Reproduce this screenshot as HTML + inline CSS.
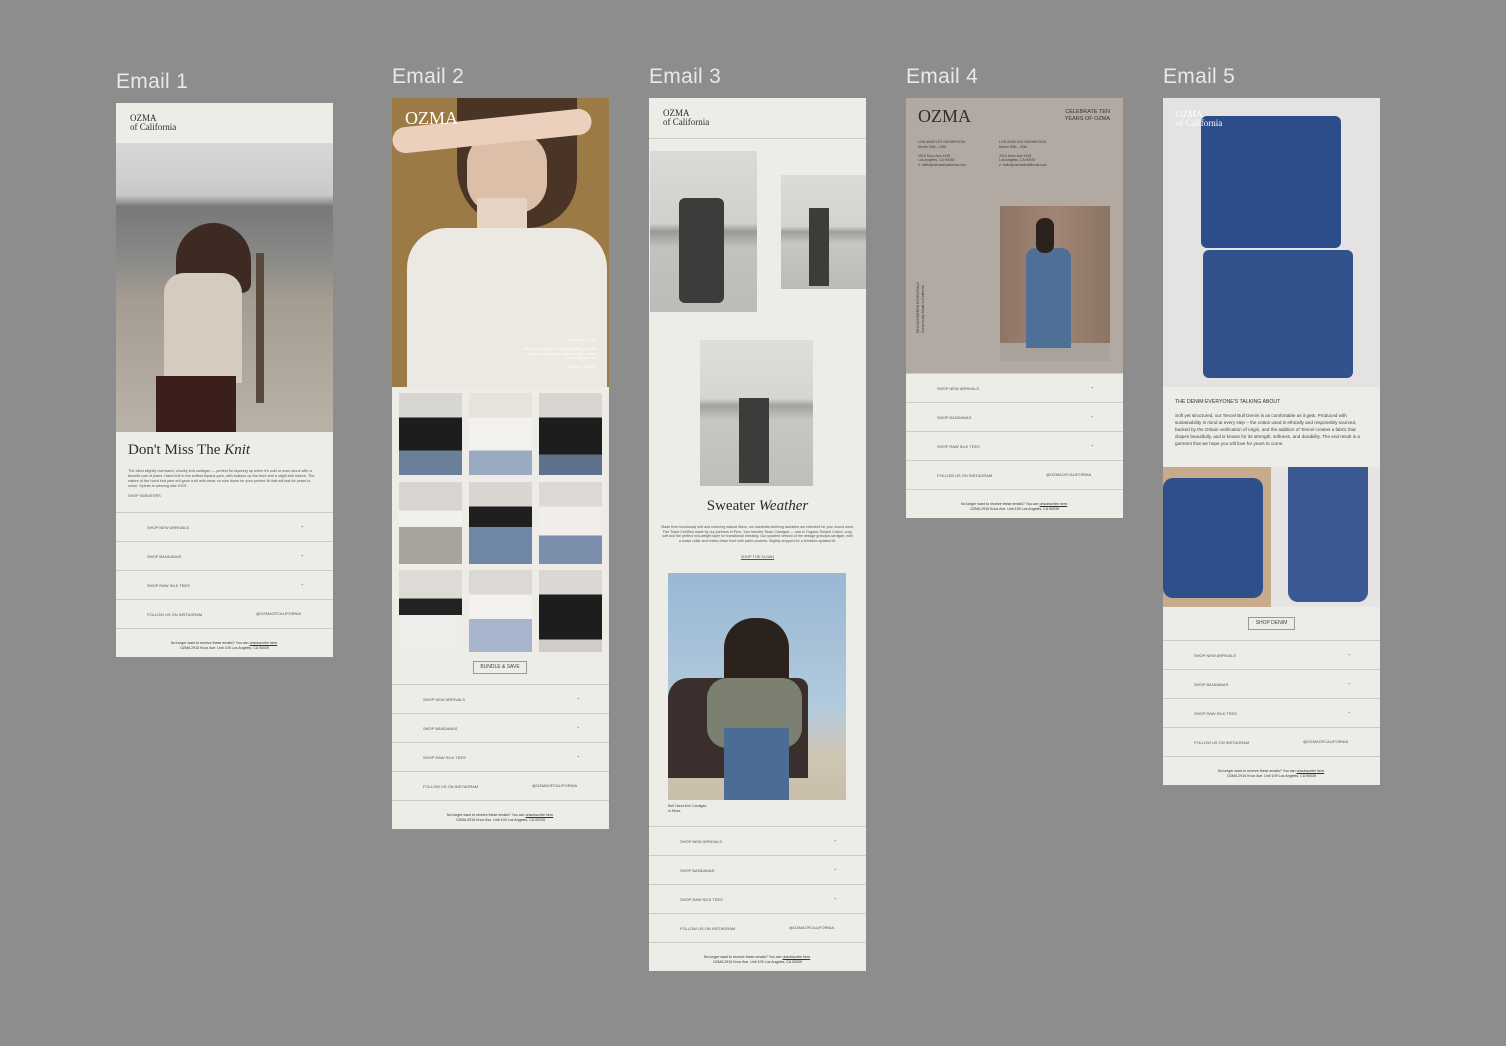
<!DOCTYPE html>
<html><head><meta charset="utf-8"><style>
*{margin:0;padding:0;box-sizing:border-box}
body{width:1506px;height:1046px;background:#8d8d8d;position:relative;overflow:hidden;font-family:"Liberation Sans",sans-serif}
.a{position:absolute}
.lbl{position:absolute;color:#e9e9e9;font-size:21px;letter-spacing:.3px}
.em{position:absolute;background:#eeece7;width:217px}
.ser{font-family:"Liberation Serif",serif;color:#2b2b2b}
.row{position:absolute;left:0;width:217px;height:29px;border-top:1px solid #cdcbc6;font-size:4px;color:#555}
.row span{position:absolute;top:12px;left:31px}
.row b{position:absolute;top:11px;left:185px;font-weight:normal}
.foot{position:absolute;left:0;width:217px;height:29px;border-top:1px solid #cdcbc6;font-size:3.6px;color:#333;text-align:center;padding-top:12px;line-height:5px}
.tx{font-size:3.8px;line-height:5px;color:#555}
</style></head><body>

<div class="lbl" style="left:116px;top:70px">Email 1</div>
<div class="lbl" style="left:392px;top:65px">Email 2</div>
<div class="lbl" style="left:649px;top:65px">Email 3</div>
<div class="lbl" style="left:906px;top:65px">Email 4</div>
<div class="lbl" style="left:1163px;top:65px">Email 5</div>

<!-- Email 1 -->
<div class="em" style="left:116px;top:103px;height:554px">
 <div class="a ser" style="left:14px;top:11px;font-size:9px;line-height:9px">OZMA<br>of California</div>
 <div class="a" style="left:0;top:40px;width:217px;height:289px;background:linear-gradient(180deg,#d8d8d6 0%,#c9c9c7 18%,#77787a 22%,#8a8a88 40%,#a59d92 55%,#b9b2a7 100%)"></div>
 <div class="a" style="left:60px;top:120px;width:75px;height:70px;border-radius:40px 40px 10px 10px;background:#3d2a22"></div>
 <div class="a" style="left:48px;top:170px;width:78px;height:110px;border-radius:20px 20px 0 0;background:#d6cbbf"></div>
 <div class="a" style="left:40px;top:273px;width:80px;height:56px;background:#3b1f1a"></div>
 <div class="a" style="left:140px;top:150px;width:8px;height:150px;background:#5a4a3e"></div>
 <div class="a ser" style="left:12px;top:339px;font-size:15px">Don't Miss The <i>Knit</i></div>
 <div class="a tx" style="left:12px;top:366px;width:192px">The ideal slightly oversized, chunky knit cardigan — perfect for layering up when it's cold or worn alone with a favorite pair of jeans. Hand knit in the softest Alpaca yarn, with buttons up the front and a slight bell sleeve. The nature of the hand knit yarn will grow a bit with wear, so size down for your perfect fit that will last for years to come. Sylvan is wearing size XS/S.</div>
 <div class="a tx" style="left:12px;top:391px">SHOP SWEATERS</div>
 <div class="row" style="top:409px"><span>SHOP NEW ARRIVALS</span><b>+</b></div>
 <div class="row" style="top:438px"><span>SHOP BANDANAS</span><b>+</b></div>
 <div class="row" style="top:467px"><span>SHOP RAW SILK TEES</span><b>+</b></div>
 <div class="row" style="top:496px"><span>FOLLOW US ON INSTAGRAM</span><b style="left:140px">@OZMAOFCALIFORNIA</b></div>
 <div class="foot" style="top:525px">No longer want to receive these emails? You can <u>unsubscribe here</u>.<br>OZMA 2915 Knox Ave. Unit 109 Los Angeles, CA 90039</div>
</div>

<!-- Email 2 -->
<div class="em" style="left:392px;top:98px;height:731px">
 <div class="a" style="left:0;top:0;width:217px;height:289px;background:#9c7a45"></div>
 <div class="a" style="left:65px;top:0;width:120px;height:130px;border-radius:0 0 50px 60px;background:#4a3426"></div>
 <div class="a" style="left:75px;top:35px;width:80px;height:80px;border-radius:30px;background:#dcbfa9"></div>
 <div class="a" style="left:0;top:20px;width:200px;height:26px;border-radius:13px;background:#ead0bd;transform:rotate(-6deg)"></div>
 <div class="a" style="left:85px;top:100px;width:50px;height:40px;background:#e7d3c3"></div>
 <div class="a" style="left:15px;top:130px;width:200px;height:159px;border-radius:40px 40px 0 0;background:#ece8e2"></div>
 <div class="a ser" style="left:13px;top:10px;font-size:18px;color:#fff">OZMA</div>
 <div class="a" style="left:130px;top:240px;width:74px;font-size:3.5px;line-height:4.5px;color:#fff;text-align:right">SIGNATURE SILK<br><br>Our classic raw silk. The perfect fitting, so-soft, made you want them again and again. Made from 100% silk noil.<br><br>BUNDLE &amp; SAVE</div>
 <div class="a" style="left:7px;top:295px;width:63px;height:82px;background:linear-gradient(#d8d6d2 30%,#1d1d1d 30%,#1d1d1d 70%,#6a7f99 70%)"></div>
 <div class="a" style="left:77px;top:295px;width:63px;height:82px;background:linear-gradient(#e6e2dc 30%,#f3f1ed 30%,#f3f1ed 70%,#9aaac0 70%)"></div>
 <div class="a" style="left:147px;top:295px;width:63px;height:82px;background:linear-gradient(#d9d6d1 30%,#1d1d1d 30%,#1d1d1d 75%,#5e728d 75%)"></div>
 <div class="a" style="left:7px;top:384px;width:63px;height:82px;background:linear-gradient(#d8d5d0 35%,#f2f0ec 35%,#f2f0ec 55%,#a7a49c 55%)"></div>
 <div class="a" style="left:77px;top:384px;width:63px;height:82px;background:linear-gradient(#d9d6d1 30%,#1f1f1f 30%,#1f1f1f 55%,#6f86a6 55%)"></div>
 <div class="a" style="left:147px;top:384px;width:63px;height:82px;background:linear-gradient(#dcd9d4 30%,#f1eeea 30%,#f1eeea 65%,#7b8fad 65%)"></div>
 <div class="a" style="left:7px;top:472px;width:63px;height:82px;background:linear-gradient(#dedbd6 35%,#222 35%,#222 55%,#efede9 55%)"></div>
 <div class="a" style="left:77px;top:472px;width:63px;height:82px;background:linear-gradient(#dcd9d4 30%,#f3f1ed 30%,#f3f1ed 60%,#a6b5cc 60%)"></div>
 <div class="a" style="left:147px;top:472px;width:63px;height:82px;background:linear-gradient(#dbd8d3 30%,#1d1d1d 30%,#1d1d1d 85%,#d0cdc8 85%)"></div>
 <div class="a" style="left:81px;top:563px;width:54px;height:13px;border:1px solid #999;font-size:5px;color:#444;text-align:center;line-height:11px">BUNDLE &amp; SAVE</div>
 <div class="row" style="top:586px"><span>SHOP NEW ARRIVALS</span><b>+</b></div>
 <div class="row" style="top:615px"><span>SHOP BANDANAS</span><b>+</b></div>
 <div class="row" style="top:644px"><span>SHOP RAW SILK TEES</span><b>+</b></div>
 <div class="row" style="top:673px"><span>FOLLOW US ON INSTAGRAM</span><b style="left:140px">@OZMAOFCALIFORNIA</b></div>
 <div class="foot" style="top:702px">No longer want to receive these emails? You can <u>unsubscribe here</u>.<br>OZMA 2915 Knox Ave. Unit 109 Los Angeles, CA 90039</div>
</div>

<!-- Email 3 -->
<div class="em" style="left:649px;top:98px;height:873px">
 <div class="a ser" style="left:14px;top:11px;font-size:9px;line-height:9px">OZMA<br>of California</div>
 <div class="a" style="left:0;top:40px;width:217px;border-top:1px solid #cfcdc8"></div>
 <div class="a" style="left:1px;top:53px;width:107px;height:161px;background:linear-gradient(180deg,#dcdad6 0%,#d2d0cc 45%,#9a9996 50%,#c4c2be 60%,#bdbbb7 100%)"></div>
 <div class="a" style="left:30px;top:100px;width:45px;height:105px;background:#3d3c3a;border-radius:6px"></div>
 <div class="a" style="left:132px;top:77px;width:85px;height:114px;background:linear-gradient(180deg,#dddbd7 0%,#d5d3cf 45%,#a09f9b 50%,#c8c6c2 60%,#bcbab6 100%)"></div>
 <div class="a" style="left:160px;top:110px;width:20px;height:78px;background:#3d3c3a"></div>
 <div class="a" style="left:51px;top:242px;width:113px;height:146px;background:linear-gradient(180deg,#e0ded9 0%,#d7d5d1 40%,#a3a29e 45%,#c9c7c3 55%,#c0beba 100%)"></div>
 <div class="a" style="left:90px;top:300px;width:30px;height:85px;background:#3d3c3a"></div>
 <div class="a ser" style="left:0;top:400px;width:217px;text-align:center;font-size:15px">Sweater <i>Weather</i></div>
 <div class="a tx" style="left:12px;top:427px;width:193px;text-align:center;font-size:3.6px;line-height:4.5px">Made from luxuriously soft and enduring natural fibers, our wardrobe-defining sweaters are intended for your sound wear. Fair Trade Certified made by our partners in Peru. Your favorite Sloan Cardigan — now in Organic Temple Cotton, cozy soft and the perfect mid-weight layer for transitional dressing. Our updated version of the vintage grandpa cardigan, with a shawl collar and button down front with patch pockets. Slightly cropped for a feminine updated fit.</div>
 <div class="a tx" style="left:0;top:457px;width:217px;text-align:center"><u>SHOP THE SLOAN</u></div>
 <div class="a" style="left:19px;top:475px;width:178px;height:227px;background:linear-gradient(180deg,#98b8d4 0%,#b3cadc 60%,#cfc6b4 80%,#c8bea9 100%)"></div>
 <div class="a" style="left:19px;top:580px;width:140px;height:100px;background:#3a2f2c;border-radius:20px 10px 0 0"></div>
 <div class="a" style="left:75px;top:520px;width:65px;height:85px;border-radius:30px 30px 5px 5px;background:#2b211d"></div>
 <div class="a" style="left:58px;top:580px;width:95px;height:70px;border-radius:20px;background:#7b8070"></div>
 <div class="a" style="left:75px;top:630px;width:65px;height:72px;background:#4d6c95"></div>
 <div class="a" style="left:19px;top:706px;font-size:3.6px;color:#444;line-height:5px">Bell Hand-Knit Cardigan<br>in Moss</div>
 <div class="row" style="top:728px"><span>SHOP NEW ARRIVALS</span><b>+</b></div>
 <div class="row" style="top:757px"><span>SHOP BANDANAS</span><b>+</b></div>
 <div class="row" style="top:786px"><span>SHOP RAW SILK TEES</span><b>+</b></div>
 <div class="row" style="top:815px"><span>FOLLOW US ON INSTAGRAM</span><b style="left:140px">@OZMAOFCALIFORNIA</b></div>
 <div class="foot" style="top:844px">No longer want to receive these emails? You can <u>unsubscribe here</u>.<br>OZMA 2915 Knox Ave. Unit 109 Los Angeles, CA 90039</div>
</div>

<!-- Email 4 -->
<div class="em" style="left:906px;top:98px;height:420px">
 <div class="a" style="left:0;top:0;width:217px;height:275px;background:#b2aaa2"></div>
 <div class="a ser" style="left:12px;top:8px;font-size:18px;color:#2e2e2e">OZMA</div>
 <div class="a" style="left:130px;top:11px;width:74px;text-align:right;font-size:5.5px;line-height:7px;color:#333">CELEBRATE TEN<br>YEARS OF OZMA</div>
 <div class="a" style="left:12px;top:42px;font-size:3.5px;line-height:4.5px;color:#3a3a3a">LOS ANGELES SHOWROOM<br>Month 03th – 09th<br><br>2915 Knox Ave #105<br>Los Angeles, CA 90039<br>e. hello@ozmaofcalifornia.com</div>
 <div class="a" style="left:93px;top:42px;font-size:3.5px;line-height:4.5px;color:#3a3a3a">LOS ANGELES SHOWROOM<br>March 03th – 30th<br><br>2915 Knox Ave #105<br>Los Angeles, CA 90039<br>e. hello@ozmaofcalifornia.com</div>
 <div class="a" style="left:10px;top:235px;font-size:3.5px;line-height:4.5px;color:#3a3a3a;transform:rotate(-90deg);transform-origin:left top;white-space:nowrap">RECONSIDERED ESSENTIALS<br>Consciously Made in California</div>
 <div class="a" style="left:94px;top:108px;width:110px;height:155px;background:linear-gradient(90deg,#8e7566,#a08574 50%,#8c7565);"></div>
 <div class="a" style="left:94px;top:245px;width:110px;height:18px;background:#a8a39a"></div>
 <div class="a" style="left:120px;top:150px;width:45px;height:100px;background:#4e6f96;border-radius:10px 10px 0 0"></div>
 <div class="a" style="left:130px;top:120px;width:18px;height:35px;background:#2b211d;border-radius:8px"></div>
 <div class="row" style="top:275px"><span>SHOP NEW ARRIVALS</span><b>+</b></div>
 <div class="row" style="top:304px"><span>SHOP BANDANAS</span><b>+</b></div>
 <div class="row" style="top:333px"><span>SHOP RAW SILK TEES</span><b>+</b></div>
 <div class="row" style="top:362px"><span>FOLLOW US ON INSTAGRAM</span><b style="left:140px">@OZMAOFCALIFORNIA</b></div>
 <div class="foot" style="top:391px">No longer want to receive these emails? You can <u>unsubscribe here</u>.<br>OZMA 2915 Knox Ave. Unit 109 Los Angeles, CA 90039</div>
</div>

<!-- Email 5 -->
<div class="em" style="left:1163px;top:98px;height:687px">
 <div class="a" style="left:0;top:0;width:217px;height:289px;background:#e4e3e1"></div>
 <div class="a" style="left:38px;top:18px;width:140px;height:132px;background:#2c4c8a;border-radius:6px"></div>
 <div class="a" style="left:40px;top:152px;width:150px;height:128px;background:#32528e;border-radius:6px"></div>
 <div class="a ser" style="left:13px;top:12px;font-size:9px;line-height:9px;color:#fff">OZMA<br>of California</div>
 <div class="a" style="left:12px;top:301px;font-size:5.2px;color:#333">THE DENIM EVERYONE'S TALKING ABOUT</div>
 <div class="a tx" style="left:12px;top:314px;width:196px;font-size:4.6px;line-height:7px;color:#444">Soft yet structured, our Tencel Bull Denim is as comfortable as it gets. Produced with sustainability in mind at every step – the cotton used is ethically and responsibly sourced, backed by the Oritain verification of origin, and the addition of Tencel creates a fabric that drapes beautifully, and is known for its strength, softness, and durability. The end result is a garment that we hope you will love for years to come.</div>
 <div class="a" style="left:0;top:369px;width:108px;height:140px;background:#c7ab8c"></div>
 <div class="a" style="left:0;top:380px;width:100px;height:120px;background:#2f4f8c;border-radius:10px"></div>
 <div class="a" style="left:108px;top:369px;width:109px;height:140px;background:#e6e4e0"></div>
 <div class="a" style="left:125px;top:369px;width:80px;height:135px;background:#3a5892;border-radius:0 0 10px 10px"></div>
 <div class="a" style="left:85px;top:519px;width:47px;height:13px;border:1px solid #999;font-size:5px;color:#444;text-align:center;line-height:11px">SHOP DENIM</div>
 <div class="row" style="top:542px"><span>SHOP NEW ARRIVALS</span><b>+</b></div>
 <div class="row" style="top:571px"><span>SHOP BANDANAS</span><b>+</b></div>
 <div class="row" style="top:600px"><span>SHOP RAW SILK TEES</span><b>+</b></div>
 <div class="row" style="top:629px"><span>FOLLOW US ON INSTAGRAM</span><b style="left:140px">@OZMAOFCALIFORNIA</b></div>
 <div class="foot" style="top:658px">No longer want to receive these emails? You can <u>unsubscribe here</u>.<br>OZMA 2915 Knox Ave. Unit 109 Los Angeles, CA 90039</div>
</div>

</body></html>
